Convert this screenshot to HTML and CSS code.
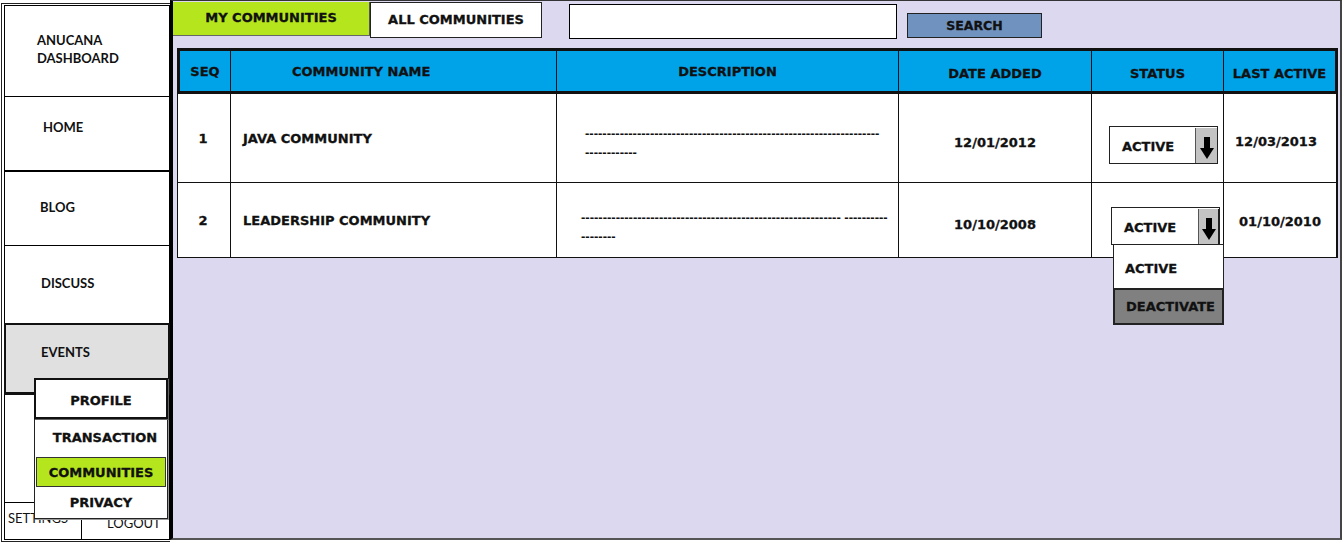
FILE: index.html
```html
<!DOCTYPE html>
<html lang="en">
<head>
<meta charset="utf-8">
<title>Anucana Dashboard - My Communities</title>
<link rel="stylesheet" href="styles.css">
</head>
<body>
<div class="app">
  <aside class="sidebar">
    <div class="frame">
      <div class="nav-item brand">ANUCANA<br>DASHBOARD</div>
      <div class="nav-item home">HOME</div>
      <div class="nav-item blog">BLOG</div>
      <div class="nav-item discuss">DISCUSS</div>
      <div class="nav-item events">EVENTS</div>
      <div class="nav-item spacer"></div>
      <div class="nav-bottom">
        <div class="settings">SETTINGS</div>
        <div class="logout">LOGOUT</div>
      </div>
    </div>
    <div class="submenu">
      <div class="sub-item profile">PROFILE</div>
      <div class="sub-item transaction">TRANSACTION</div>
      <div class="sub-item communities">COMMUNITIES</div>
      <div class="sub-item privacy">PRIVACY</div>
    </div>
  </aside>

  <main class="main">
    <div class="toolbar">
      <div class="tab tab-active">MY COMMUNITIES</div>
      <div class="tab tab-all">ALL COMMUNITIES</div>
      <div class="search-input"></div>
      <div class="search-btn">SEARCH</div>
    </div>

    <div class="grid">
      <div class="row head">
        <div class="cell">SEQ</div>
        <div class="cell name-head">COMMUNITY NAME</div>
        <div class="cell">DESCRIPTION</div>
        <div class="cell low">DATE ADDED</div>
        <div class="cell low">STATUS</div>
        <div class="cell low">LAST ACTIVE</div>
      </div>

      <div class="row body r1">
        <div class="cell seq">1</div>
        <div class="cell name">JAVA COMMUNITY</div>
        <div class="cell desc"><span>--------------------------------------------------------------------<br>------------</span></div>
        <div class="cell date">12/01/2012</div>
        <div class="cell status">
          <div class="select">
            <span class="select-label">ACTIVE</span>
            <span class="select-btn"><svg width="14" height="22" viewBox="0 0 14 22"><rect x="4" y="0" width="6" height="12" fill="#000"/><polygon points="0,11 14,11 7,22" fill="#000"/></svg></span>
          </div>
        </div>
        <div class="cell last">12/03/2013</div>
      </div>

      <div class="row body r2">
        <div class="cell seq">2</div>
        <div class="cell name">LEADERSHIP COMMUNITY</div>
        <div class="cell desc d2"><span>------------------------------------------------------------ ----------<br>--------</span></div>
        <div class="cell date">10/10/2008</div>
        <div class="cell status s2">
          <div class="select open">
            <span class="select-label">ACTIVE</span>
            <span class="select-btn"><svg width="14" height="22" viewBox="0 0 14 22"><rect x="4" y="0" width="6" height="12" fill="#000"/><polygon points="0,11 14,11 7,22" fill="#000"/></svg></span>
            <div class="options">
              <div class="option">ACTIVE</div>
              <div class="option selected">DEACTIVATE</div>
            </div>
          </div>
        </div>
        <div class="cell last l2">01/10/2010</div>
      </div>
    </div>
  </main>
</div>
</body>
</html>
```

FILE: styles.css
```css
* { box-sizing: border-box; }

html, body {
  margin: 0;
  padding: 0;
}

body {
  width: 1344px;
  height: 545px;
  overflow: hidden;
  background: #ffffff;
  color: #111;
  font-family: "DejaVu Sans", "Liberation Sans", sans-serif;
  font-weight: 700;
  font-size: 13px;
}

.app {
  display: flex;
  height: 545px;
}

/* ---------- Sidebar ---------- */
.sidebar {
  position: relative;
  width: 170px;
  flex: none;
  padding: 3px 0 3px 1px;
}

.frame {
  height: 100%;
  border: 1px solid #222;
  border-right: 0;
  padding: 1px 0 1px 2px;
  display: flex;
  flex-direction: column;
}

.nav-item {
  border-left: 1px solid #000;
  border-right: 1px solid #000;
  border-bottom: 1px solid #000;
  font-family: Lato, "Open Sans", sans-serif;
  font-weight: 700;
  font-size: 13px;
  line-height: 18px;
  color: #111;
  flex: none;
}

.brand {
  height: 92px;
  border-top: 1px solid #000;
  padding: 25px 0 0 32px;
}

.home {
  height: 75px;
  border-bottom-width: 2px;
  padding: 21px 0 0 38px;
}

.blog {
  height: 74px;
  padding: 26px 0 0 35px;
}

.discuss {
  height: 77px;
  border-bottom: 0;
  padding: 28px 0 0 36px;
}

.events {
  height: 72px;
  background: #e0e0e0;
  border: 2px solid #111;
  border-bottom-width: 3px;
  padding: 18px 0 0 35px;
}

.spacer {
  height: 108px;
}

.nav-bottom {
  height: 37px;
  flex: none;
  display: flex;
  border-left: 1px solid #000;
  border-right: 1px solid #000;
  border-bottom: 1px solid #000;
  font-family: Lato, "Open Sans", sans-serif;
  font-weight: 400;
  font-size: 13px;
  color: #111;
}

.settings {
  width: 77px;
  border-right: 1px solid #000;
  padding: 7px 0 0 3px;
}

.logout {
  flex: 1;
  padding: 12px 0 0 25px;
}

/* Flyout submenu (overlay) */
.submenu {
  position: absolute;
  left: 34px;
  top: 378px;
  width: 134px;
  background: #fff;
  border: 1px solid #222;
  border-top: 0;
  box-shadow: 1px 1px 0 #999;
}

.sub-item {
  display: flex;
  align-items: center;
  justify-content: center;
  font-size: 13px;
  color: #111;
  -webkit-text-stroke: 0.3px #111;
}

.profile {
  height: 41px;
  margin: 0 -1px;
  border: 2px solid #111;
  padding-top: 4px;
  box-shadow: 1px 1px 0 #666;
}

.transaction {
  height: 36px;
  padding-left: 8px;
}

.communities {
  height: 30px;
  margin: 2px 1px 0;
  background: #b5e61d;
  border: 1px solid #333;
}

.privacy {
  height: 31px;
}

/* ---------- Main ---------- */
.main {
  flex: none;
  width: 1172px;
  height: 540px;
  background: #dcd8f0;
  border-left: 3px solid #000;
  border-top: 1px solid #333;
  border-right: 2px solid #444;
  border-bottom: 2px solid #555;
  padding-top: 1px;
  -webkit-text-stroke: 0.3px #111;
}

.toolbar {
  display: flex;
  align-items: flex-start;
  height: 37px;
}

.tab {
  display: flex;
  align-items: center;
  justify-content: center;
  font-size: 13px;
  color: #111;
}

.tab-active {
  width: 197px;
  height: 34px;
  background: #b5e61d;
  border-right: 1px solid #555;
  border-bottom: 1px solid #666;
  padding-bottom: 2px;
}

.tab-all {
  width: 172px;
  height: 36px;
  background: #fff;
  border: 1px solid #222;
  padding-bottom: 2px;
}

.search-input {
  width: 328px;
  height: 35px;
  margin: 2px 0 0 27px;
  background: #fff;
  border: 1px solid #000;
}

.search-btn {
  width: 135px;
  height: 25px;
  margin: 11px 0 0 10px;
  background: #7092be;
  border: 1px solid #222;
  display: flex;
  align-items: center;
  justify-content: center;
  font-size: 12.5px;
  color: #111;
}

/* ---------- Community grid ---------- */
.grid {
  margin: 9px 0 0 4px;
  width: 1161px;
}

.row {
  display: grid;
}

.cell {
  display: flex;
  align-items: center;
  justify-content: center;
  border-right: 1px solid #111;
}

.cell:last-child {
  border-right: 0;
}

.head {
  height: 46px;
  background: #00a2e8;
  border: 3px solid #111;
  grid-template-columns: 51px 326px 342px 193px 132px 111px;
  color: #111;
}

.head .name-head {
  justify-content: flex-start;
  padding-left: 61px;
}

.head .low {
  padding-top: 4px;
}

.body {
  background: #fff;
  border-left: 1px solid #111;
  border-right: 2px solid #111;
  border-bottom: 1px solid #111;
  grid-template-columns: 53px 326px 342px 193px 132px 112px;
}

.r1 { height: 89px; }
.r2 { height: 75px; }

.body .name {
  justify-content: flex-start;
  padding-left: 12px;
  font-size: 13px;
}

.body .seq {
  padding-right: 2px;
}

.body .desc {
  justify-content: flex-start;
  padding: 10px 0 0 28px;
  font-family: "Liberation Sans", Arial, sans-serif;
  font-weight: 700;
  font-size: 13px;
  line-height: 19px;
  -webkit-text-stroke: 0;
}

.body .desc.d2 {
  padding: 14px 0 0 24px;
}

.body .date {
  padding-top: 8px;
}

.body .last {
  padding: 6px 8px 0 0;
}

.body .last.l2 {
  padding: 2px 0 0 0;
}

.body .status {
  justify-content: flex-start;
  align-items: flex-start;
  padding: 32px 0 0 17px;
}

.body .status.s2 {
  padding: 24px 0 0 19px;
}

.select {
  position: relative;
  width: 109px;
  height: 38px;
  background: #fff;
  border: 1px solid #222;
  display: flex;
  align-items: stretch;
}

.select-label {
  flex: 1;
  display: flex;
  align-items: center;
  padding: 2px 0 0 12px;
}

.select-btn {
  width: 22px;
  margin: 1px 0 0 0;
  background: #c3c3c3;
  border-left: 1px solid #555;
  display: flex;
  align-items: flex-end;
  justify-content: center;
  padding-bottom: 4px;
}

.select.open .select-btn {
  border-right: 2px solid #222;
  margin-right: -1px;
}

.options {
  position: absolute;
  left: 1px;
  top: 100%;
  width: 111px;
  background: #fff;
  border: 1px solid #222;
}

.option {
  height: 43px;
  display: flex;
  align-items: center;
  padding: 4px 0 0 11px;
}

.option.selected {
  height: 37px;
  background: #808080;
  border: 2px solid #222;
  margin: 0 -1px -1px;
  padding: 0 0 0 11px;
}
```
